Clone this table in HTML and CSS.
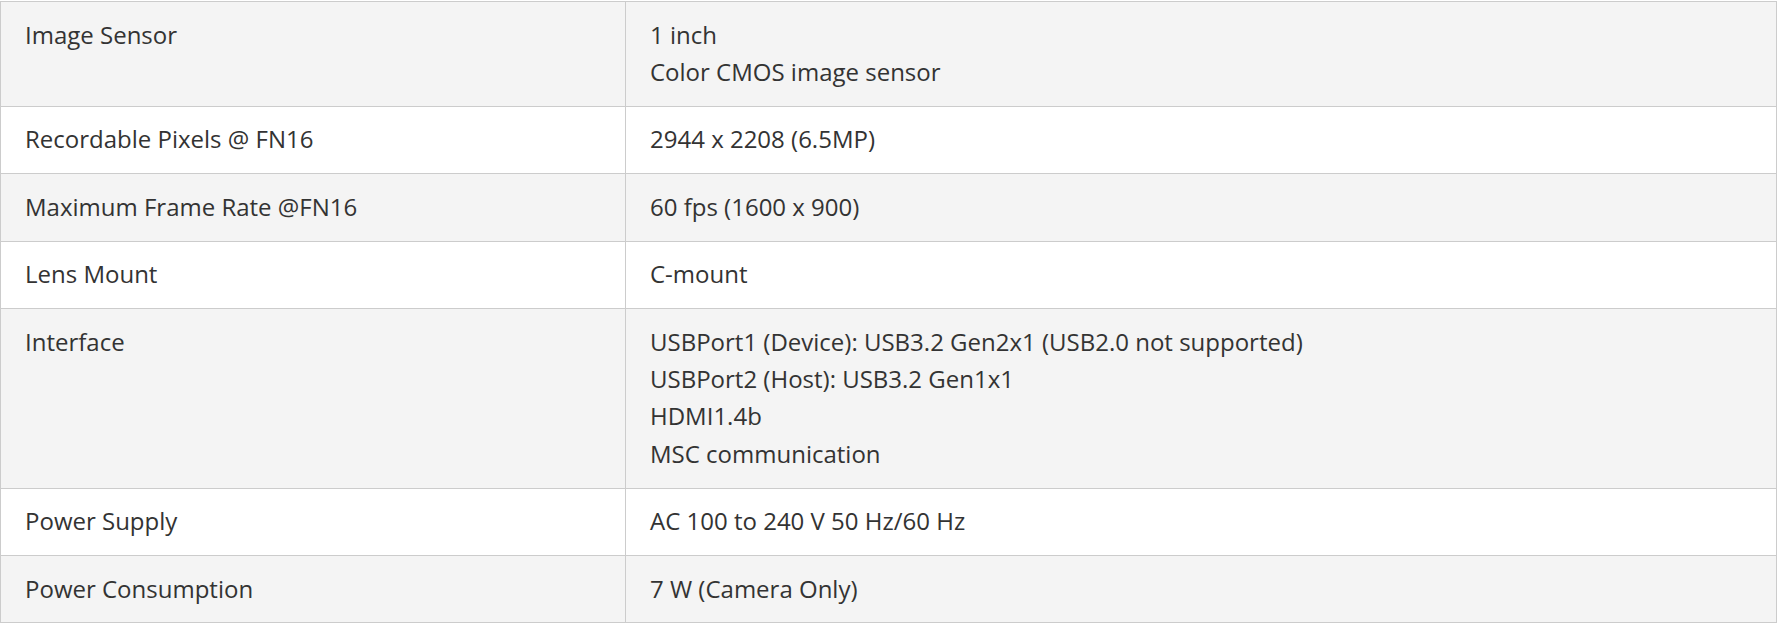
FILE: index.html
```html
<!DOCTYPE html>
<html lang="en">
<head>
<meta charset="utf-8">
<title>Specifications</title>
<link rel="stylesheet" href="styles.css">
</head>
<body>
<table class="spec">
  <tbody>
    <tr class="alt"><td class="label">Image Sensor</td><td class="value">1 inch<br>Color CMOS image sensor</td></tr>
    <tr><td class="label">Recordable Pixels @ FN16</td><td class="value">2944 x 2208 (6.5MP)</td></tr>
    <tr class="alt"><td class="label">Maximum Frame Rate @FN16</td><td class="value">60 fps (1600 x 900)</td></tr>
    <tr><td class="label">Lens Mount</td><td class="value">C-mount</td></tr>
    <tr class="alt"><td class="label">Interface</td><td class="value">USBPort1 (Device): USB3.2 Gen2x1 (USB2.0 not supported)<br>USBPort2 (Host): USB3.2 Gen1x1<br>HDMI1.4b<br>MSC communication</td></tr>
    <tr><td class="label">Power Supply</td><td class="value">AC 100 to 240 V 50 Hz/60 Hz</td></tr>
    <tr class="alt"><td class="label">Power Consumption</td><td class="value">7 W (Camera Only)</td></tr>
  </tbody>
</table>
</body>
</html>
```
FILE: styles.css
```css
html, body {
  margin: 0;
  padding: 0;
  background: #ffffff;
}
body {
  padding-top: 1px;
  font-family: "Open Sans", "Noto Sans", sans-serif;
  color: #333333;
}
.spec {
  width: 1777px;
  border-collapse: collapse;
  table-layout: fixed;
  font-size: 24px;
  line-height: 37.4px;
}
.spec td {
  border: 1px solid #cccccc;
  padding: 13.5px 24px 15.5px;
  vertical-align: top;
  text-align: left;
}
.spec .label {
  width: 576px;
}
.spec tr.alt td {
  background: #f4f4f4;
}
```
